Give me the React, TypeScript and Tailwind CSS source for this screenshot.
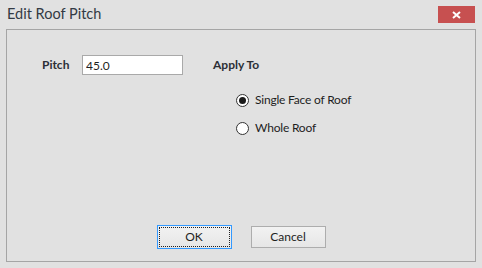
import React from "react";

function Radio({ checked, label }: { checked?: boolean; label: string }) {
  return (
    <label className="flex items-center gap-[6px] h-[14px]">
      <span className="w-[13px] h-[13px] rounded-full border border-[#333] bg-white flex items-center justify-center">
        {checked && <span className="w-[7px] h-[7px] rounded-full bg-[#1a1a1a]" />}
      </span>
      <span className="tracking-[-0.2px]">{label}</span>
    </label>
  );
}

export default function App() {
  return (
    <div className="w-[482px] h-[268px] bg-[#e1e1e1] flex flex-col text-[12px] text-[#1e1e1e] font-['Lato',sans-serif] overflow-hidden">
      {/* title bar */}
      <div className="h-[29px] flex items-start justify-between pl-[7px] pr-[7px]">
        <span className="text-[14.5px] leading-none mt-[7px] text-[#333a44]">Edit Roof Pitch</span>
        <button className="mt-[6px] w-[37px] h-[17px] bg-[#c75050] flex items-center justify-center">
          <svg width="9" height="8" viewBox="0 0 9 8">
            <path d="M1 1 L8 7 M8 1 L1 7" stroke="white" strokeWidth="2" />
          </svg>
        </button>
      </div>

      {/* content panel */}
      <div className="mx-[6px] h-[233px] border border-[#a5a5a5] flex flex-col">
        <div className="flex items-center mt-[25px] h-[20px]">
          <span className="ml-[35px] w-[40px] font-bold text-[#2c2f36]">Pitch</span>
          <input
            defaultValue="45.0"
            className="w-[101px] h-[20px] bg-white border border-[#a9a9a9] px-[3px] outline-none text-[12px]"
          />
          <span className="ml-[30px] font-bold text-[#2c2f36]">Apply To</span>
        </div>

        <div className="flex flex-col gap-[14px] ml-[229px] mt-[18px]">
          <Radio checked label="Single Face of Roof" />
          <Radio label="Whole Roof" />
        </div>

        <div className="flex-1" />

        <div className="flex justify-center items-center gap-[19px] mb-[12px]">
          <button className="w-[75px] h-[24px] border border-[#3399ff] bg-gradient-to-b from-[#f2f2f2] to-[#e6e6e6] p-[1px]">
            <span className="w-full h-full flex items-center justify-center border border-dotted border-[#222]">OK</span>
          </button>
          <button className="w-[75px] h-[22px] border border-[#adadad] bg-gradient-to-b from-[#f2f2f2] to-[#e6e6e6] flex items-center justify-center">
            Cancel
          </button>
        </div>
      </div>
    </div>
  );
}
